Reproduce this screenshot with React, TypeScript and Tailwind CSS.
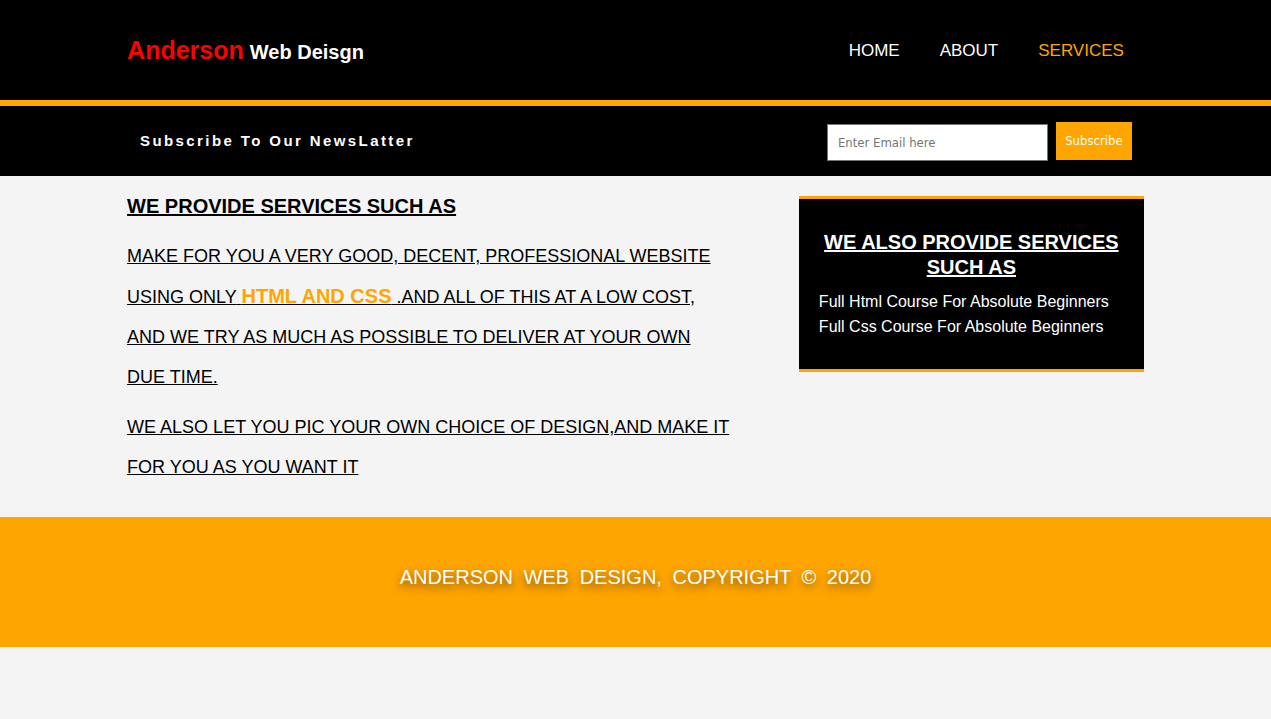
export default function App() {
  const orange = "bg-[#ffa500]";
  return (
    <div className="min-h-screen bg-[#f4f4f4] font-['Liberation_Sans',Arial,sans-serif] text-black">
      {/* Header */}
      <header className="bg-black border-b-[6px] border-[#ffa500]">
        <div className="w-[80%] mx-auto h-[100px] pt-[2px] flex items-center justify-between">
          <div className="font-bold flex items-baseline">
            <span className="text-[#ff0000] text-[25px]">Anderson</span>
            <span className="text-white text-[20px] ml-[6px]">Web Deisgn</span>
          </div>
          <nav>
            <ul className="flex text-[17px] uppercase">
              <li className="px-5 text-white">Home</li>
              <li className="px-5 text-white">About</li>
              <li className="px-5 text-[#ffa500]">Services</li>
            </ul>
          </nav>
        </div>
      </header>

      {/* Newsletter */}
      <section className="bg-black">
        <div className="w-[80%] mx-auto h-[70px] flex items-center justify-between">
          <h1 className="pl-[13px] text-white font-bold text-[15px] tracking-[2.4px]">
            Subscribe To Our NewsLatter
          </h1>
          <form className="flex items-center gap-2 pr-3 font-['DejaVu_Sans_Condensed','Noto_Sans',sans-serif] text-[13px]">
            <input
              type="email"
              placeholder="Enter Email here"
              className="mt-[3px] w-[221px] h-[37px] bg-white border border-[#767676] px-[10px] placeholder:text-[#757575] outline-none"
            />
            <button type="button" className={`${orange} text-white w-[76px] h-[38px]`}>
              Subscribe
            </button>
          </form>
        </div>
      </section>

      {/* Main */}
      <section>
        <div className="w-[80%] mx-auto flex justify-between items-start">
          <article className="w-[606px] pt-[19px] pb-[30px]">
            <h1 className="text-[20px] leading-[23px] font-bold underline mb-[18px]">
              WE PROVIDE SERVICES SUCH AS
            </h1>
            <p className="text-[18px] leading-[40px] underline">
              MAKE FOR YOU A VERY GOOD, DECENT, PROFESSIONAL WEBSITE USING ONLY{" "}
              <span className="text-[#ffa500] font-bold text-[20px]">HTML AND CSS</span> .AND ALL OF THIS AT A LOW
              COST, AND WE TRY AS MUCH AS POSSIBLE TO DELIVER AT YOUR OWN DUE TIME.
            </p>
            <p className="text-[18px] leading-[40px] underline mt-[10px]">
              WE ALSO LET YOU PIC YOUR OWN CHOICE OF DESIGN,AND MAKE IT FOR YOU AS YOU WANT IT
            </p>
          </article>

          <aside className="box-content w-[30%] px-5 mt-[20px] bg-black border-y-[3px] border-[#ffa500] pt-[31px] pb-[30px] text-white">
            <h3 className="text-center text-[20px] leading-[25px] font-bold underline">
              WE ALSO PROVIDE SERVICES SUCH AS
            </h3>
            <ul className="mt-[9px] text-[16px] leading-[25px]">
              <li>Full Html Course For Absolute Beginners</li>
              <li>Full Css Course For Absolute Beginners</li>
            </ul>
          </aside>
        </div>
      </section>

      {/* Footer */}
      <footer className={`${orange} h-[130px] pt-[49px] text-center text-white text-[20px] leading-[23px] [word-spacing:5px] [text-shadow:0_4px_8px_rgba(0,0,0,0.55)]`}>
        <p>ANDERSON WEB DESIGN, COPYRIGHT © 2020</p>
      </footer>
    </div>
  );
}
